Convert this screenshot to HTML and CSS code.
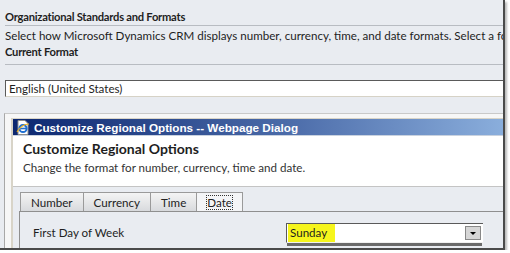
FILE: index.html
```html
<!DOCTYPE html>
<html lang="en">
<head>
    <meta charset="UTF-8">
    <title>Organizational Standards and Formats</title>
    <link rel="stylesheet" href="styles.css">
</head>
<body>
<div class="frame">
    <div class="section-title">Organizational Standards and Formats</div>
    <div class="desc">Select how Microsoft Dynamics CRM displays number, currency, time, and date formats. Select a format for your organization.</div>
    <div class="section-title sub">Current Format</div>
    <div class="format-box">English (United States)</div>

    <div class="dialog-outer">
        <div class="dialog">
            <div class="titlebar">
                <svg class="ie-icon" width="14" height="15" viewBox="0 0 14 15">
                    <path d="M2 0.5h7l3 3v11h-10z" fill="#fff" stroke="#8c8c8c"/>
                    <circle cx="7" cy="8.5" r="3.6" fill="none" stroke="#1f6fd1" stroke-width="2"/>
                    <path d="M3.6 8.5h7" stroke="#1f6fd1" stroke-width="1.6"/>
                    <path d="M1 12c3-5 8-8 12-8" fill="none" stroke="#f2b21b" stroke-width="1.2"/>
                </svg>
                <span>Customize Regional Options -- Webpage Dialog</span>
            </div>
            <div class="dialog-head">
                <div class="dialog-title">Customize Regional Options</div>
                <div class="dialog-sub">Change the format for number, currency, time and date.</div>
            </div>
            <div class="dialog-body">
                <div class="tabs">
                    <div class="tab">Number</div>
                    <div class="tab">Currency</div>
                    <div class="tab">Time</div>
                    <div class="tab active"><span class="focus">Date</span></div>
                </div>
                <div class="panel">
                    <div class="row">
                        <span class="label">First Day of Week</span>
                        <div class="select">
                            <span class="value">Sunday</span>
                            <span class="arrow"></span>
                        </div>
                    </div>
                </div>
            </div>
        </div>
    </div>
</div>
</body>
</html>
```

FILE: styles.css
```css
body {
    margin: 0;
    background: #fff;
    font-family: Lato, "Open Sans", sans-serif;
    font-size: 11.6px;
    color: #1e1e1e;
}
.frame {
    width: 503px;
    height: 248px;
    background: #e9ecf1;
    border-right: 2px solid #4a4a4a;
    border-bottom: 2px solid #4a4a4a;
    box-shadow: 2px 2px 2px #bbb;
    overflow: hidden;
}
.section-title {
    font-weight: bold;
    font-size: 11.2px;
    letter-spacing: -0.25px;
    margin: 0 0 0 5px;
    padding-top: 9px;
    height: 16px;
    line-height: 16px;
    border-bottom: 1px solid #b8bcc2;
}
.section-title.sub {
    padding-top: 0;
    height: 19px;
    line-height: 14px;
}
.desc {
    margin-left: 5px;
    white-space: nowrap;
    overflow: hidden;
    line-height: 18px;
    padding-top: 1px;
}
.format-box {
    margin: 15px 0 0 5px;
    height: 15px;
    line-height: 15px;
    padding-left: 3px;
    background: #fff;
    border-top: 1px solid #5a5a5a;
    border-left: 1px solid #5a5a5a;
    border-bottom: 1px solid #d6d2c6;
}
.dialog-outer {
    margin: 16px 0 0 4px;
    border-top: 1px solid #c9c9c9;
    border-left: 1px solid #a8a8a8;
    background: #f7f7f7;
    padding: 4px 0 0 6px;
    height: 200px;
}
.dialog {
    border-left: 2px solid #d8d4c8;
    border-top: 1px solid #d8d4c8;
    height: 100%;
    background: #fff;
}
.titlebar {
    height: 16px;
    display: flex;
    align-items: center;
    gap: 4px;
    padding-left: 3px;
    background: linear-gradient(to right, #0c2770, #4a6aa8 55%, #8aaedc);
    color: #fff;
    font-family: "Liberation Sans", Arial, sans-serif;
    font-weight: bold;
    font-size: 11.7px;
    border-bottom: 1px solid #c9d2df;
}
.ie-icon {
    flex: none;
}
.dialog-head {
    padding: 4px 0 0 10px;
    height: 46px;
    border-bottom: 1px solid #c4c4c4;
    background: #fff;
}
.dialog-title {
    font-weight: bold;
    font-size: 14px;
    line-height: 18px;
}
.dialog-sub {
    line-height: 20px;
    color: #333;
}
.dialog-body {
    background: #e9ecf1;
    padding: 5px 0 0 6px;
    height: 100px;
}
.tabs {
    display: flex;
    height: 19px;
    margin-left: 1px;
}
.tab {
    padding: 0 10px;
    line-height: 19px;
    border: 1px solid #9a9a9a;
    border-bottom: none;
    border-right: none;
    background: linear-gradient(#f4f4f4, #d8dadd);
    color: #222;
}
.tab.active {
    background: #f4f5f7;
    border-right: 1px solid #9a9a9a;
}
.focus {
    outline: 1px dotted #333;
    line-height: 13px;
}
.panel {
    border-top: 1px solid #8f8f8f;
    border-left: 1px solid #8f8f8f;
    height: 80px;
}
.row {
    display: flex;
    align-items: center;
    justify-content: space-between;
    padding: 11px 0 0 13px;
    width: 450px;
}
.label {
    line-height: 18px;
}
.select {
    width: 196px;
    height: 18px;
    display: flex;
    align-items: center;
    justify-content: space-between;
    background: #fff;
    border-top: 1px solid #5a5a5a;
    border-left: 1px solid #5a5a5a;
    border-bottom: 1px solid #f0f0f0;
    box-shadow: 0 4px 0 -1px #6a6a6a;
}
.value {
    background: #f6f51c;
    padding: 1px 8px 1px 2px;
    line-height: 16px;
    margin-left: 1px;
}
.arrow {
    width: 14px;
    height: 12px;
    margin-right: 2px;
    background: #d6d6d6;
    border: 1px solid #888;
    position: relative;
}
.arrow::after {
    content: "";
    position: absolute;
    left: 4px;
    top: 5px;
    border-left: 3px solid transparent;
    border-right: 3px solid transparent;
    border-top: 3px solid #000;
}
```
